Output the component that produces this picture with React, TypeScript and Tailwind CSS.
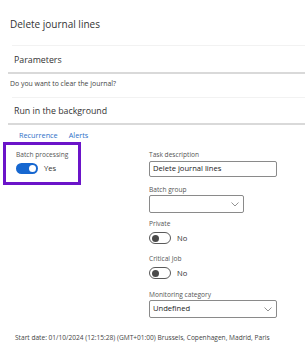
import React from 'react';

const Toggle = ({ on }: { on: boolean }) =>
  on ? (
    <div className="w-[22px] h-[11px] rounded-full bg-[#1667d0] flex items-center justify-end pr-[2px]">
      <div className="w-[7px] h-[7px] rounded-full bg-white" />
    </div>
  ) : (
    <div className="w-[22px] h-[12px] rounded-full border border-[#5a5a5a] bg-white flex items-center pl-[2px]">
      <div className="w-[7px] h-[7px] rounded-full bg-[#4a4a4a]" />
    </div>
  );

const Chevron = () => (
  <svg width="8" height="5" viewBox="0 0 8 5" fill="none" stroke="#777" strokeWidth="0.8">
    <path d="M0.5 0.5 L4 4 L7.5 0.5" />
  </svg>
);

const Label = ({ children, className = '' }: { children: React.ReactNode; className?: string }) => (
  <div className={`text-[6.6px] leading-[10px] text-[#555] ${className}`}>{children}</div>
);

export default function App() {
  return (
    <div className="w-[305px] h-[360px] bg-white overflow-hidden text-[#222] font-['Open_Sans',sans-serif]">
      <div className="h-[45px] pl-[10px] pt-[16px] text-[10px] leading-[16px] text-[#333]">Delete journal lines</div>
      <div className="ml-[12px] h-px bg-[#f2f2f2]" />
      <div className="h-[26px] pl-[14px] pt-[7px] text-[8.8px] leading-[14px] font-medium text-[#333]">Parameters</div>
      <div className="ml-[8px] h-[2px] bg-[#d9d9d9]" />
      <div className="h-[23px] pl-[10px] pt-[5px] text-[6.9px] leading-[10px] text-[#444]">Do you want to clear the journal?</div>
      <div className="ml-[12px] h-px bg-[#f2f2f2]" />
      <div className="h-[25px] pl-[14px] pt-[6px] text-[8.8px] leading-[14px] font-medium text-[#333]">Run in the background</div>
      <div className="ml-[8px] h-[2px] bg-[#d9d9d9]" />
      <div className="mt-[4px] h-[12px] pl-[19px] flex gap-[11px] text-[7.3px] leading-[12px] text-[#2e6fc8]">
        <span>Recurrence</span>
        <span>Alerts</span>
      </div>
      <div className="mt-[1px] flex">
        <div className="w-[146px] pl-[3px]">
          <div className="w-[78px] h-[43px] border-[3px] border-[#6b14c9] pl-[10px] pt-[5px]">
            <Label>Batch processing</Label>
            <div className="mt-[3px] flex items-center gap-[6px]">
              <Toggle on />
              <span className="text-[7.6px] leading-[11px] text-[#333]">Yes</span>
            </div>
          </div>
        </div>
        <div className="flex-1 pl-[3px] pt-[8px]">
          <Label>Task description</Label>
          <div className="mt-[1px] w-[128px] h-[16px] border border-[#8a8a8a] rounded-[2px] flex items-center pl-[3px] text-[7.6px] text-[#222]">
            Delete journal lines
          </div>
          <Label className="mt-[8px]">Batch group</Label>
          <div className="w-[95px] h-[18px] border border-[#8a8a8a] rounded-[2px] flex items-center justify-end pr-[4px]">
            <Chevron />
          </div>
          <Label className="mt-[6px]">Private</Label>
          <div className="mt-[3px] flex items-center gap-[6px]">
            <Toggle on={false} />
            <span className="text-[7.6px] leading-[11px] text-[#333]">No</span>
          </div>
          <Label className="mt-[10px]">Critical Job</Label>
          <div className="mt-[3px] flex items-center gap-[6px]">
            <Toggle on={false} />
            <span className="text-[7.6px] leading-[11px] text-[#333]">No</span>
          </div>
          <Label className="mt-[11px]">Monitoring category</Label>
          <div className="w-[128px] h-[18px] border border-[#8a8a8a] rounded-[2px] flex items-center justify-between pl-[3px] pr-[4px] text-[7.6px] text-[#222]">
            <span>Undefined</span>
            <Chevron />
          </div>
        </div>
      </div>
      <div className="mt-[15px] pl-[15px] text-[6.6px] leading-[10px] text-[#444] whitespace-nowrap">
        Start date: 01/10/2024 (12:15:28) (GMT+01:00) Brussels, Copenhagen, Madrid, Paris
      </div>
    </div>
  );
}
